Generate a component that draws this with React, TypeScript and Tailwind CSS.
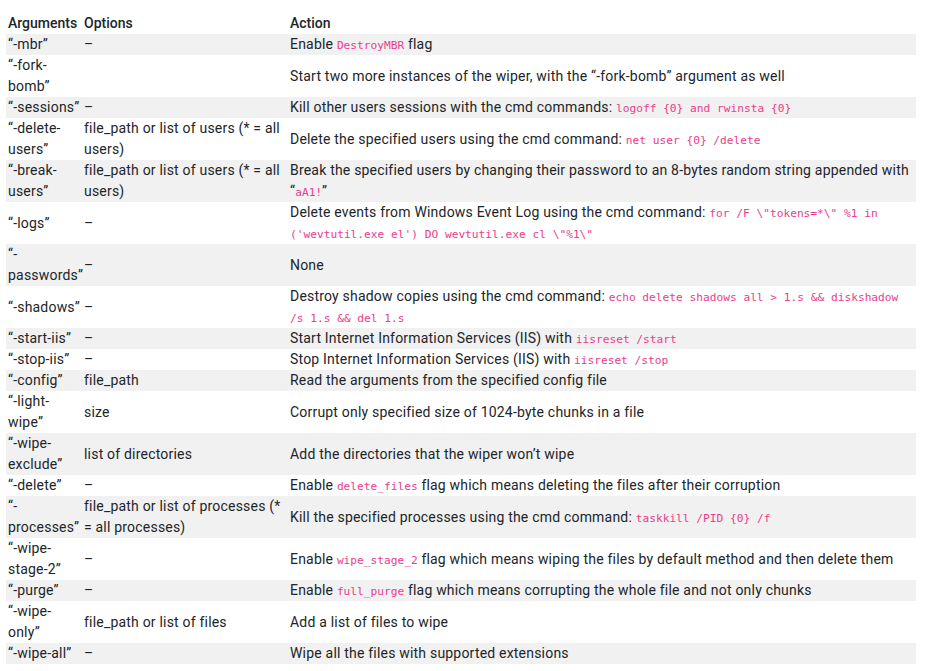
const code = 'font-["DejaVu_Sans_Mono","Liberation_Mono",monospace] text-[11.2px] leading-none tracking-normal text-[#e83e8c]';

const C = ({ children }: { children: React.ReactNode }) => <code className={code}>{children}</code>;

const rows: { arg: React.ReactNode; opt: React.ReactNode; action: React.ReactNode }[] = [
  { arg: '“-mbr”', opt: '–', action: <>Enable <C>DestroyMBR</C> flag</> },
  { arg: '“-fork-bomb”', opt: '', action: <>Start two more instances of the wiper, with the “-fork-bomb” argument as well</> },
  { arg: '“-sessions”', opt: '–', action: <>Kill other users sessions with the cmd commands: <C>logoff {'{0}'} and rwinsta {'{0}'}</C></> },
  { arg: '“-delete-users”', opt: 'file_path or list of users (* = all users)', action: <>Delete the specified users using the cmd command: <C>net user {'{0}'} /delete</C></> },
  { arg: '“-break-users”', opt: 'file_path or list of users (* = all users)', action: <>Break the specified users by changing their password to an 8-bytes random string appended with “<C>aA1!</C>”</> },
  { arg: '“-logs”', opt: '–', action: <>Delete events from Windows Event Log using the cmd command: <C>for /F \"tokens=*\" %1 in ('wevtutil.exe el') DO wevtutil.exe cl \"%1\"</C></> },
  { arg: '“-passwords”', opt: '–', action: 'None' },
  { arg: '“-shadows”', opt: '–', action: <>Destroy shadow copies using the cmd command: <C>echo delete shadows all &gt; 1.s &amp;&amp; diskshadow /s 1.s &amp;&amp; del 1.s</C></> },
  { arg: '“-start-iis”', opt: '–', action: <>Start Internet Information Services (IIS) with <C>iisreset /start</C></> },
  { arg: '“-stop-iis”', opt: '–', action: <>Stop Internet Information Services (IIS) with <C>iisreset /stop</C></> },
  { arg: '“-config”', opt: 'file_path', action: 'Read the arguments from the specified config file' },
  { arg: '“-light-wipe”', opt: 'size', action: 'Corrupt only specified size of 1024-byte chunks in a file' },
  { arg: '“-wipe-exclude”', opt: 'list of directories', action: 'Add the directories that the wiper won’t wipe' },
  { arg: '“-delete”', opt: '–', action: <>Enable <C>delete_files</C> flag which means deleting the files after their corruption</> },
  { arg: '“-processes”', opt: 'file_path or list of processes (* = all processes)', action: <>Kill the specified processes using the cmd command: <C>taskkill /PID {'{0}'} /f</C></> },
  { arg: '“-wipe-stage-2”', opt: '–', action: <>Enable <C>wipe_stage_2</C> flag which means wiping the files by default method and then delete them</> },
  { arg: '“-purge”', opt: '–', action: <>Enable <C>full_purge</C> flag which means corrupting the whole file and not only chunks</> },
  { arg: '“-wipe-only”', opt: 'file_path or list of files', action: 'Add a list of files to wipe' },
  { arg: '“-wipe-all”', opt: '–', action: 'Wipe all the files with supported extensions' },
];

export default function App() {
  return (
    <div className='min-h-screen bg-white pt-[11px] pl-[6px] font-["Roboto",sans-serif] text-[14px] tracking-[0.2px] leading-[21px] text-[#212529]'>
      <table className="w-[910px] border-collapse table-fixed">
        <colgroup>
          <col className="w-[77px]" />
          <col className="w-[205px]" />
          <col />
        </colgroup>
        <thead>
          <tr>
            <th className="pl-[2px] pt-[2px] text-left font-medium tracking-normal align-bottom">Arguments</th>
            <th className="pl-[1px] pt-[2px] text-left font-medium tracking-normal align-bottom">Options</th>
            <th className="pl-[2px] pt-[2px] text-left font-medium tracking-normal align-bottom">Action</th>
          </tr>
        </thead>
        <tbody>
          {rows.map((r, i) => (
            <tr key={i} className={i % 2 === 0 ? 'bg-[#f1f1f1]' : 'bg-white'}>
              <td className="pl-[2px] align-middle">{r.arg}</td>
              <td className="pl-[1px] align-middle">{r.opt}</td>
              <td className="pl-[2px] align-middle">{r.action}</td>
            </tr>
          ))}
        </tbody>
      </table>
    </div>
  );
}
